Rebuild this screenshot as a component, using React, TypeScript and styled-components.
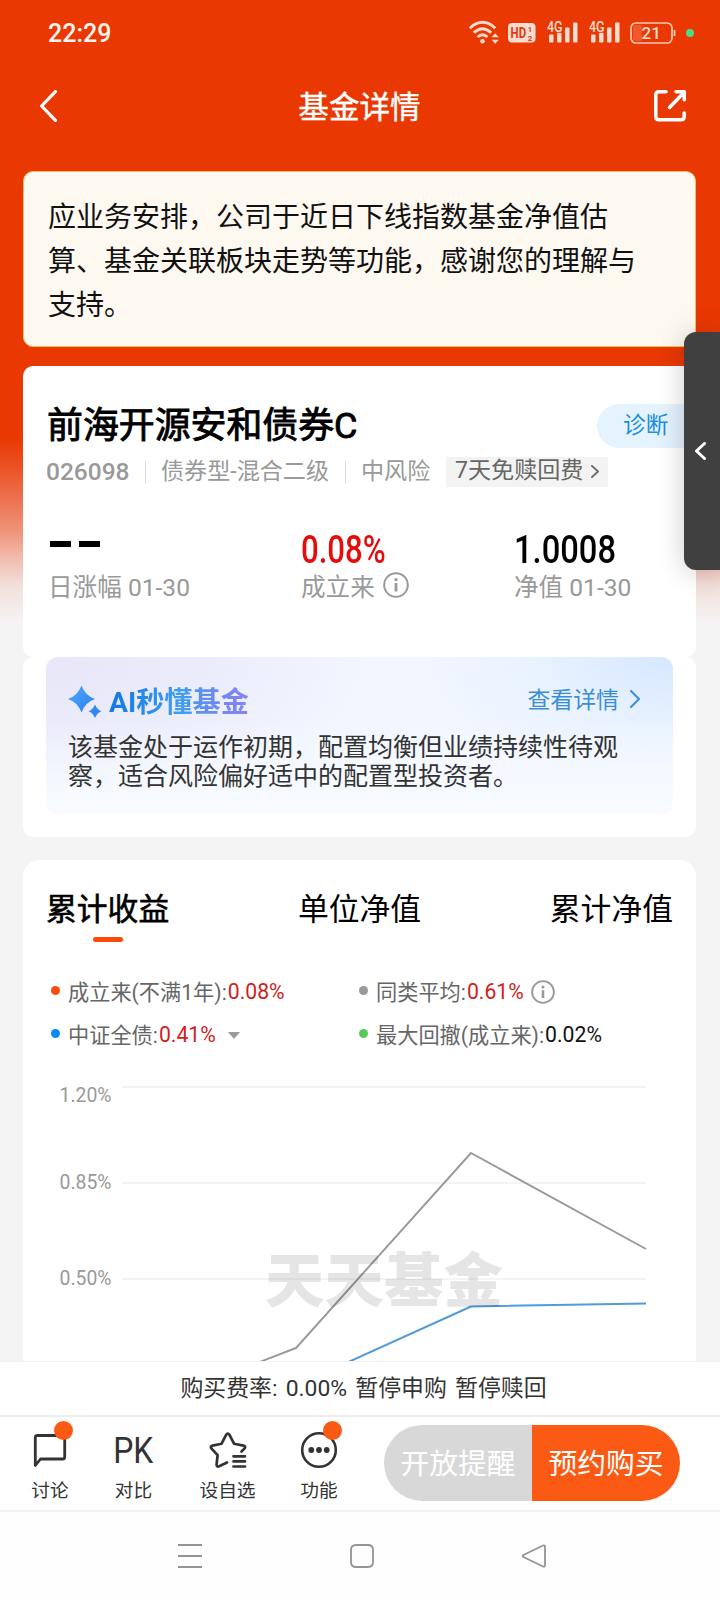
import React from 'react';
import styled, { createGlobalStyle, css } from 'styled-components';

const GlobalStyle = createGlobalStyle`
  * { box-sizing: border-box; }
  body {
    margin: 0;
    background: #f4f4f4;
    font-family: Roboto, "Noto Sans CJK SC", sans-serif;
    color: #333;
  }
`;

const Page = styled.div`
  position: relative;
  display: flex;
  flex-direction: column;
  width: 720px;
  height: 1600px;
  overflow: hidden;
  background: linear-gradient(
    to bottom,
    #e93802 0,
    #e93802 438px,
    #ea5527 470px,
    #ec7351 500px,
    #ee9278 530px,
    #f1bfb1 560px,
    #f3dfd9 585px,
    #f4f4f4 622px
  );
`;

const StatusBar = styled.div`
  display: flex;
  align-items: center;
  justify-content: space-between;
  height: 64px;
  padding: 1px 26px 0 48px;
  flex: none;
`;

const Clock = styled.span`
  margin-top: 2px;
  font-size: 25px;
  font-weight: 500;
  line-height: 30px;
  color: #fff4ee;
`;

const StatusIcons = styled.div`
  display: flex;
  align-items: center;
  height: 26px;
`;

const TitleBar = styled.header`
  display: flex;
  align-items: center;
  justify-content: space-between;
  height: 84px;
  padding: 0 33px 0 38px;
  flex: none;
`;

const PageTitle = styled.h1`
  margin: 3px 0 0 9px;
  font-size: 30.6px;
  font-weight: 400;
  line-height: 44px;
  color: #fff;
  -webkit-text-stroke: 0.4px #fff;
`;

const Content = styled.main`
  display: flex;
  flex-direction: column;
  flex: 1;
  min-height: 0;
  padding: 23px 24px 0 23px;
  overflow: hidden;
`;

const Notice = styled.section`
  flex: none;
  height: 176px;
  padding: 24px 50px 0 24px;
  border: 1px solid #f4c065;
  border-radius: 10px;
  background: #fdf8f0;
  font-size: 28px;
  line-height: 44px;
  color: #111;
`;

const Card = styled.section`
  flex: none;
  background: #fff;
  border-radius: 10px;
`;

const FundCard = styled(Card)`
  height: 291px;
  margin-top: 19px;
  padding: 36px 0 0 23px;
`;

const FundHeading = styled.div`
  display: flex;
  align-items: center;
  justify-content: space-between;
  height: 48px;
`;

const FundName = styled.h2`
  margin: 0 0 0 1px;
  font-size: 35.9px;
  line-height: 48px;
  font-weight: 400;
  color: #000;
  -webkit-text-stroke: 0.9px #000;
`;

const DiagnoseButton = styled.button`
  width: 99px;
  height: 44px;
  margin-top: -1px;
  padding: 0 0 0 26px;
  border: 0;
  border-radius: 22px 0 0 22px;
  background: #e5f3ff;
  color: #1a8de4;
  font: inherit;
  font-size: 22.7px;
  line-height: 43px;
  text-align: left;
`;

const MetaRow = styled.div`
  display: flex;
  align-items: center;
  height: 30px;
  margin-top: 7px;
  font-size: 23.1px;
  color: #999;
  white-space: nowrap;
`;

const FundCode = styled.span`
  width: 99px;
  margin-top: -1px;
  font-size: 24.5px;
  font-weight: 500;
`;

const MetaItem = styled.span<{ $width: number }>`
  width: ${p => p.$width}px;
  height: 23px;
  padding-left: 15px;
  border-left: 1px solid #dcdcdc;
  line-height: 22px;
`;

const FeeTag = styled.span`
  display: flex;
  align-items: center;
  gap: 8px;
  width: 162px;
  height: 30px;
  padding-left: 9px;
  background: #f3f3f3;
  color: #666;
  line-height: 26px;
  svg { margin-top: -1px; }
`;

const FeeText = styled.span`
  margin-top: -3px;
`;

const Stats = styled.div`
  display: grid;
  grid-template-columns: 253px 213px 1fr;
  margin-top: 42px;
  padding-left: 2px;
`;

const Stat = styled.div`
  display: flex;
  flex-direction: column;
`;

const StatValue = styled.div<{ $color?: string }>`
  display: flex;
  align-items: center;
  height: 40px;
  color: ${p => p.$color || '#000'};
`;

const Digits = styled.span<{ $scale: number }>`
  display: inline-block;
  margin-top: 1px;
  font-size: 38px;
  font-weight: 500;
  line-height: 40px;
  white-space: nowrap;
  transform: scaleX(${p => p.$scale});
  transform-origin: left center;
`;

const Dash = styled.i`
  width: 21px;
  height: 6px;
  margin: -11px 8px 0 2px;
  background: #000;
  & + & { margin-left: 0; }
`;

const StatLabel = styled.div`
  display: flex;
  align-items: center;
  gap: 8px;
  height: 32px;
  font-size: 24.6px;
  color: #999;
  white-space: nowrap;
`;

const AiCard = styled(Card)`
  height: 180px;
  padding: 0 23px;
`;

const AiPanel = styled.div`
  height: 157px;
  padding: 25px 22px 0;
  border-radius: 12px;
  background:
    linear-gradient(to bottom, rgba(247, 250, 255, 0) 40%, #f7faff 92%, #fafcff 100%),
    radial-gradient(ellipse 260px 130px at 100% 0, #d5e7ff 0, rgba(225, 238, 255, 0.6) 50%, rgba(240, 247, 255, 0) 100%),
    radial-gradient(ellipse 330px 170px at 0 0, #e8e6f8 0, rgba(233, 232, 249, 0.7) 50%, rgba(241, 246, 255, 0) 100%),
    #f2f7ff;
`;

const AiHeader = styled.div`
  display: flex;
  align-items: center;
  height: 38px;
`;

const AiTitle = styled.span`
  margin: 3px auto 0 7px;
  font-size: 28.2px;
  line-height: 38px;
  font-weight: 700;
  color: transparent;
  background: linear-gradient(90deg, #147be8 5%, #3f9ef0 50%, #7386f2 80%, #8485f4);
  background-clip: text;
  -webkit-background-clip: text;
`;

const AiLink = styled.a`
  display: flex;
  align-items: center;
  gap: 11px;
  margin: -6px 11px 0 0;
  font-size: 22.9px;
  color: #3a8ed6;
  svg { margin-top: 2px; }
`;

const AiText = styled.p`
  margin: 13px 0 0;
  font-size: 25px;
  line-height: 29px;
  color: #333;
  white-space: nowrap;
`;

const ChartCard = styled(Card)`
  display: flex;
  flex-direction: column;
  flex: 1;
  min-height: 0;
  margin-top: 23px;
  padding: 28px 23px 0;
  border-radius: 16px 16px 0 0;
`;

const Tabs = styled.nav`
  display: flex;
  justify-content: space-between;
`;

const Tab = styled.div<{ $active?: boolean }>`
  display: flex;
  flex-direction: column;
  align-items: center;
  height: 58px;
  font-size: 30.8px;
  line-height: 44px;
  color: #000;
  ${p =>
    p.$active &&
    css`
      -webkit-text-stroke: 0.6px #000;
      &::after {
        content: '';
        width: 30px;
        height: 5px;
        margin-top: 5px;
        border-radius: 3px;
        background: #fd4a04;
      }
    `}
`;

const Legend = styled.div`
  display: grid;
  grid-template-columns: 308px 1fr;
  grid-auto-rows: 43px;
  margin-top: 23px;
`;

const LegendItem = styled.div`
  display: flex;
  align-items: center;
  padding-left: 5px;
  font-size: 21.2px;
  color: #666;
  white-space: nowrap;
`;

const Dot = styled.i<{ $color: string }>`
  width: 9px;
  height: 9px;
  margin: 0 8px 0 0;
  border-radius: 50%;
  background: ${p => p.$color};
`;

const LegendValue = styled.span<{ $rise?: boolean }>`
  margin: 2px 0 0 1px;
  color: ${p => (p.$rise ? '#cf1e1e' : '#111')};
`;

const InfoSlot = styled.span`
  display: flex;
  margin: 2px 0 0 7px;
`;

const Caret = styled.i`
  margin: 4px 0 0 12px;
  border: 6.5px solid transparent;
  border-top: 7.5px solid #999;
  border-bottom: 0;
`;

const ChartArea = styled.div`
  position: relative;
  flex: 1;
  min-height: 0;
  margin-top: 13px;
  overflow: hidden;
  svg { display: block; }
`;

const Watermark = styled.span`
  position: absolute;
  left: 219px;
  top: 182px;
  font-size: 59.5px;
  line-height: 64px;
  font-weight: 900;
  color: rgba(0, 0, 0, 0.1);
`;

const FeeBar = styled.div`
  flex: none;
  height: 54px;
  border-top: 1px solid #f2f2f2;
  background: #fff;
  font-size: 22.9px;
  line-height: 54px;
  text-align: center;
  padding-left: 7px;
  word-spacing: 2.5px;
  color: #333;
`;

const ActionBar = styled.div`
  display: flex;
  flex: none;
  height: 97px;
  padding-left: 9px;
  border-top: 2px solid #ededed;
  border-bottom: 2px solid #f3f3f3;
  background: #fff;
`;

const Action = styled.div<{ $width: number }>`
  position: relative;
  display: flex;
  flex-direction: column;
  align-items: center;
  width: ${p => p.$width}px;
  padding-top: 12px;
  font-size: 18.7px;
  line-height: 26px;
  color: #333;
`;

const ActionIcon = styled.div`
  display: flex;
  align-items: center;
  justify-content: center;
  height: 42px;
  margin-bottom: 7px;
`;

const Badge = styled.i`
  position: absolute;
  top: 4px;
  left: calc(50% + 4px);
  width: 19px;
  height: 19px;
  border-radius: 50%;
  background: #fa5a14;
`;

const PkMark = styled.span`
  font-size: 37px;
  line-height: 42px;
  transform: translateY(1px) scaleX(0.86);
`;

const Buttons = styled.div`
  display: flex;
  height: 76px;
  margin: 8px 0 0 25px;
`;

const PillButton = styled.button<{ $primary?: boolean }>`
  width: 148px;
  padding: 0 0 3px;
  border: 0;
  border-radius: ${p => (p.$primary ? '0 38px 38px 0' : '38px 0 0 38px')};
  background: ${p => (p.$primary ? '#fb5a14' : '#d8d8d8')};
  color: #fff;
  font: inherit;
  font-size: 28.8px;
  white-space: nowrap;
`;

const SystemNav = styled.div`
  display: flex;
  flex: none;
  align-items: center;
  height: 88px;
  padding-left: 177px;
  gap: 146px;
  background: #fefefe;
`;

const SideHandle = styled.div`
  position: absolute;
  top: 332px;
  right: 0;
  display: flex;
  align-items: center;
  justify-content: center;
  width: 36px;
  height: 238px;
  padding-right: 3px;
  border-radius: 12px 0 0 12px;
  background: #404040;
  box-shadow: 0 2px 28px rgba(0, 0, 0, 0.2);
`;

const Chevron = ({ w, h, stroke, left }: { w: number; h: number; stroke: number; left?: boolean }) => (
  <svg width={w} height={h} viewBox={`0 0 ${w} ${h}`} fill="none" stroke="currentColor" strokeWidth={stroke} strokeLinecap="round" strokeLinejoin="round">
    <path
      d={
        left
          ? `M${w - stroke / 2} ${stroke / 2}L${stroke / 2} ${h / 2}L${w - stroke / 2} ${h - stroke / 2}`
          : `M${stroke / 2} ${stroke / 2}L${w - stroke / 2} ${h / 2}L${stroke / 2} ${h - stroke / 2}`
      }
    />
  </svg>
);

const InfoIcon = ({ size }: { size: number }) => (
  <svg width={size} height={size} viewBox="0 0 26 26" fill="none" stroke="#999" strokeWidth="2">
    <circle cx="13" cy="13" r="11.8" />
    <path d="M13 11v8.5" strokeWidth="2.8" />
    <circle cx="13" cy="7.6" r="1.7" fill="#999" stroke="none" />
  </svg>
);

const Wifi = () => (
  <svg width="32" height="26" viewBox="0 0 32 26" fill="none" stroke="#ffdccf" strokeWidth="2.9">
    <path d="M1.8 8.2Q14.5 -3.5 27.2 8.2" />
    <path d="M5.8 12.8Q14.5 4.7 23.2 12.8" />
    <path d="M9.6 17Q14.5 12.5 19.4 17" />
    <circle cx="14.5" cy="21.3" r="2.3" fill="#ffdccf" stroke="none" />
    <path d="M23.5 17.3l3.7-4 3.7 4zM23.5 19.8l3.7 4 3.7-4z" fill="#ffdccf" stroke="none" />
  </svg>
);

const HdBadge = () => (
  <svg width="28" height="20" viewBox="0 0 28 20" fontFamily="Roboto" fontWeight="700" fill="#e03a0c">
    <rect width="27.5" height="19.5" rx="4" fill="#ffdccf" />
    <text transform="translate(2.6 15.2) scale(0.74 1)" fontSize="15.5">HD</text>
    <text x="19.8" y="8.8" fontSize="7.8">1</text>
    <text x="19.8" y="18" fontSize="7.8">2</text>
  </svg>
);

const Signal = () => (
  <svg width="31" height="24" viewBox="0 0 31 24" fill="#ffdccf">
    <text x="0" y="11.6" fontFamily="Roboto" fontSize="14.5" fontWeight="500" textLength="15.5" lengthAdjust="spacingAndGlyphs">4G</text>
    <rect x="2" y="14.5" width="4.5" height="8" rx="1" />
    <rect x="10" y="12.8" width="4.5" height="9.7" rx="1" />
    <rect x="18" y="7.5" width="4.5" height="15" rx="1" />
    <rect x="26" y="2.5" width="4.5" height="20" rx="1" />
  </svg>
);

const Battery = () => (
  <svg width="46" height="22" viewBox="0 0 46 22" fill="none">
    <rect x="3" y="3" width="9" height="16" rx="2" fill="#f1592c" />
    <rect x="1" y="1" width="41" height="20" rx="5" stroke="#ffc7b2" strokeWidth="1.7" />
    <path d="M44.5 8v6" stroke="#ffc7b2" strokeWidth="1.8" />
    <text x="11.5" y="17" fontFamily="Roboto" fontSize="17" fontWeight="500" fill="#ffdccf">21</text>
  </svg>
);

const ShareIcon = () => (
  <svg width="34" height="34" viewBox="0 0 34 34" fill="none" stroke="#fff" strokeWidth="3.5" strokeLinecap="round" strokeLinejoin="round">
    <path d="M13 2.8H6Q2.8 2.8 2.8 6v21.5q0 3.2 3.2 3.2h22q3.2 0 3.2-3.2V24" />
    <path d="M16.5 18.5L30 4.500M23 2.8h8.3v8" />
  </svg>
);

const Sparkles = () => (
  <svg width="34" height="34" viewBox="0 0 34 34">
    <defs>
      <linearGradient id="spark" x1="0" y1="0" x2="1" y2="1">
        <stop offset="0" stopColor="#55a8f7" />
        <stop offset="1" stopColor="#2480f5" />
      </linearGradient>
    </defs>
    <path d="M13.5 1.5Q17.5 12 27 15Q17.5 18 13.5 28.5Q9.5 18 0 15Q9.5 12 13.5 1.5Z" fill="url(#spark)" />
    <path d="M27 20.5Q29 25.5 33.5 27.3Q29 29 27 34Q25 29 20.5 27.3Q25 25.5 27 20.5Z" fill="#3289f4" />
  </svg>
);

const axis = [
  { label: '1.20%', line: 19, base: 33.5 },
  { label: '0.85%', line: 115, base: 120.5 },
  { label: '0.50%', line: 211, base: 216.5 },
];

const Chart = () => (
  <svg width="627" height="340" viewBox="0 0 627 340" fill="none">
    {axis.map(a => (
      <g key={a.label}>
        <path d={`M76 ${a.line}H600`} stroke="#f4f4f4" strokeWidth="2" />
        <text x="65.5" y={a.base} textAnchor="end" fontFamily="Roboto" fontSize="19.8" textLength="52" lengthAdjust="spacingAndGlyphs" fill="#999">
          {a.label}
        </text>
      </g>
    ))}
    <path d="M180 307L250 280L425 85L600 181" stroke="#999" strokeWidth="1.9" strokeLinejoin="round" />
    <path d="M245 320L425 238.5L600 235.5" stroke="#509bd9" strokeWidth="2" strokeLinejoin="round" />
  </svg>
);

const CommentIcon = () => (
  <svg width="34" height="36" viewBox="0 0 34 36" fill="none" stroke="#333" strokeWidth="2.8" strokeLinejoin="round">
    <path d="M2.3 33.5V5.5Q2.3 3.5 4.3 3.5H29.7Q31.7 3.5 31.7 5.5V25Q31.7 27 29.7 27H7.5Z" />
  </svg>
);

const StarIcon = () => (
  <svg width="38" height="38" viewBox="0 0 38 38" fill="none" stroke="#333" strokeWidth="2.7" strokeLinecap="round" strokeLinejoin="round">
    <path d="M18 31.5L10.2 35.3Q7.5 36.3 7.6 33.5L8.6 24.2L2.3 17.4Q1 15.3 3.5 14.6L12.6 12.7L17.1 3.9Q18.8 1.2 20.5 3.9L25 12.7L34.5 14.6Q37 15.3 35.7 17.4L32.5 20.5" />
    <path d="M24.5 25.3H36M24.5 30.4H36M24.5 35.5H36" />
  </svg>
);

const MoreIcon = () => (
  <svg width="38" height="38" viewBox="0 0 38 38">
    <circle cx="19" cy="19" r="16.8" fill="none" stroke="#333" strokeWidth="2.6" />
    <circle cx="11.3" cy="19" r="2.9" fill="#333" />
    <circle cx="19" cy="19" r="2.9" fill="#333" />
    <circle cx="26.7" cy="19" r="2.9" fill="#333" />
  </svg>
);

const NavIcon = ({ d }: { d: string }) => (
  <svg width="26" height="26" viewBox="0 0 26 26" fill="none" stroke="#949494" strokeWidth="1.8" strokeLinejoin="round">
    <path d={d} />
  </svg>
);

const BackArrow = styled.span`
  display: flex;
  padding-left: 2px;
  color: #fff;
`;

const HandleArrow = styled.span`
  display: flex;
  color: #fff;
`;

const HdSlot = styled.span`
  display: flex;
  margin: 0 11px 0 8px;
`;

const BatterySlot = styled.span`
  display: flex;
  margin: 0 10px;
`;

const SignalPair = styled.span`
  display: flex;
  gap: 11px;
  margin-top: -2px;
`;

const CameraDot = styled.i`
  width: 8px;
  height: 8px;
  border-radius: 50%;
  background: #4cdc85;
`;

export default function App() {
  return (
    <Page>
      <GlobalStyle />
      <StatusBar>
        <Clock>22:29</Clock>
        <StatusIcons>
          <Wifi />
          <HdSlot><HdBadge /></HdSlot>
          <SignalPair><Signal /><Signal /></SignalPair>
          <BatterySlot><Battery /></BatterySlot>
          <CameraDot />
        </StatusIcons>
      </StatusBar>
      <TitleBar>
        <BackArrow><Chevron w={17} h={32} stroke={3.2} left /></BackArrow>
        <PageTitle>基金详情</PageTitle>
        <ShareIcon />
      </TitleBar>

      <Content>
        <Notice>
          应业务安排，公司于近日下线指数基金净值估<br />
          算、基金关联板块走势等功能，感谢您的理解与<br />
          支持。
        </Notice>

        <FundCard>
          <FundHeading>
            <FundName>前海开源安和债券C</FundName>
            <DiagnoseButton>诊断</DiagnoseButton>
          </FundHeading>
          <MetaRow>
            <FundCode>026098</FundCode>
            <MetaItem $width={200}>债券型-混合二级</MetaItem>
            <MetaItem $width={101}>中风险</MetaItem>
            <FeeTag>
              <FeeText>7天免赎回费</FeeText>
              <Chevron w={8} h={13} stroke={1.8} />
            </FeeTag>
          </MetaRow>
          <Stats>
            <Stat>
              <StatValue><Dash /><Dash /></StatValue>
              <StatLabel>日涨幅 01-30</StatLabel>
            </Stat>
            <Stat>
              <StatValue $color="#e60c0c"><Digits $scale={0.82}>0.08%</Digits></StatValue>
              <StatLabel>成立来<InfoIcon size={26} /></StatLabel>
            </Stat>
            <Stat>
              <StatValue><Digits $scale={0.86}>1.0008</Digits></StatValue>
              <StatLabel>净值 01-30</StatLabel>
            </Stat>
          </Stats>
        </FundCard>

        <AiCard>
          <AiPanel>
            <AiHeader>
              <Sparkles />
              <AiTitle>AI秒懂基金</AiTitle>
              <AiLink>查看详情<Chevron w={10} h={18} stroke={2} /></AiLink>
            </AiHeader>
            <AiText>
              该基金处于运作初期，配置均衡但业绩持续性待观<br />
              察，适合风险偏好适中的配置型投资者。
            </AiText>
          </AiPanel>
        </AiCard>

        <ChartCard>
          <Tabs>
            <Tab $active>累计收益</Tab>
            <Tab>单位净值</Tab>
            <Tab>累计净值</Tab>
          </Tabs>
          <Legend>
            <LegendItem>
              <Dot $color="#f94d0b" />成立来(不满1年):<LegendValue $rise>0.08%</LegendValue>
            </LegendItem>
            <LegendItem>
              <Dot $color="#999" />同类平均:<LegendValue $rise>0.61%</LegendValue>
              <InfoSlot><InfoIcon size={24} /></InfoSlot>
            </LegendItem>
            <LegendItem>
              <Dot $color="#0a88f5" />中证全债:<LegendValue $rise>0.41%</LegendValue>
              <Caret />
            </LegendItem>
            <LegendItem>
              <Dot $color="#58c95c" />最大回撤(成立来):<LegendValue>0.02%</LegendValue>
            </LegendItem>
          </Legend>
          <ChartArea>
            <Chart />
            <Watermark>天天基金</Watermark>
          </ChartArea>
        </ChartCard>
      </Content>

      <FeeBar>购买费率: 0.00% 暂停申购 暂停赎回</FeeBar>
      <ActionBar>
        <Action $width={82}>
          <ActionIcon><CommentIcon /></ActionIcon>
          <Badge />讨论
        </Action>
        <Action $width={85}>
          <ActionIcon><PkMark>PK</PkMark></ActionIcon>对比
        </Action>
        <Action $width={103}>
          <ActionIcon><StarIcon /></ActionIcon>设自选
        </Action>
        <Action $width={80}>
          <ActionIcon><MoreIcon /></ActionIcon>
          <Badge />功能
        </Action>
        <Buttons>
          <PillButton>开放提醒</PillButton>
          <PillButton $primary>预约购买</PillButton>
        </Buttons>
      </ActionBar>
      <SystemNav>
        <NavIcon d="M1 2H25M1 13H25M1 24H25" />
        <NavIcon d="M7 2H19Q24 2 24 7V19Q24 24 19 24H7Q2 24 2 19V7Q2 2 7 2Z" />
        <NavIcon d="M22 2.5L2.5 12Q1 13 2.5 14L22 23.5Q24 24.2 24 22V4Q24 1.8 22 2.5Z" />
      </SystemNav>

      <SideHandle>
        <HandleArrow><Chevron w={11} h={18} stroke={3} left /></HandleArrow>
      </SideHandle>
    </Page>
  );
}
